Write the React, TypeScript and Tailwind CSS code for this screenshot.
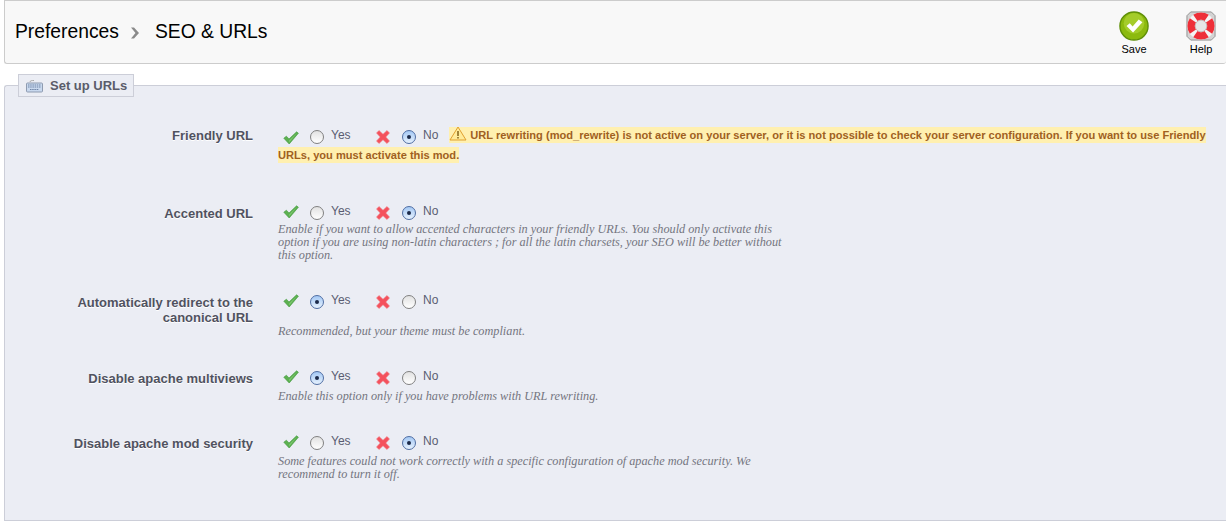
const sans = "font-['Liberation_Sans',Arial,sans-serif]";

function CheckIcon() {
	return (
		<svg width="16" height="14" viewBox="0 0 16 14" className="shrink-0">
			<path
				d="M0.8 7.2 L3.4 5.2 L6 8 L13.6 0.8 L15.4 2.2 L6.2 13 Z"
				fill="#5cb050"
				stroke="#3f9a3c"
				strokeWidth="0.6"
				strokeLinejoin="round"
			/>
			<path d="M6.1 9.6 L14 1.8 L6.2 11.6 Z" fill="#8fd07f" opacity="0.7" />
		</svg>
	);
}

function CrossIcon() {
	return (
		<svg width="14" height="14" viewBox="0 0 14 14" className="shrink-0">
			<path
				d="M0.5 3 L3 0.5 L7 4.2 L11 0.5 L13.5 3 L9.8 7 L13.5 11 L11 13.5 L7 9.8 L3 13.5 L0.5 11 L4.2 7 Z"
				fill="#f4515c"
				stroke="#f08088"
				strokeWidth="0.6"
				strokeLinejoin="round"
			/>
		</svg>
	);
}

function Radio({ checked }: { checked: boolean }) {
	return (
		<span
			className={
				checked
					? "flex size-[14px] shrink-0 items-center justify-center rounded-full border border-[#4f6da3] bg-gradient-to-b from-[#a4c8f4] to-[#e6f1fd]"
					: "block size-[14px] shrink-0 rounded-full border border-[#808080] bg-gradient-to-b from-[#e2e2e2] to-white"
			}
		>
			{checked && <span className="size-1 rounded-full bg-[#1c2a4a]" />}
		</span>
	);
}

function Toggle({
	yes,
	className = "-translate-y-[1px]",
	checkClassName = "-translate-y-[2px]",
}: {
	yes: boolean;
	className?: string;
	checkClassName?: string;
}) {
	return (
		<span className={`inline-flex h-5 items-center align-top text-xs text-[#5a5d72] ${className}`}>
			<span className={`ml-[5px] flex w-[16px] justify-center ${checkClassName}`}>
				<CheckIcon />
			</span>
			<span className="ml-[11px] -translate-y-[1px]">
				<Radio checked={yes} />
			</span>
			<span className="ml-[7px] w-[21px] -translate-y-[3px]">Yes</span>
			<span className="ml-[24px] -translate-y-[1px]">
				<CrossIcon />
			</span>
			<span className="ml-[12px] -translate-y-[1px]">
				<Radio checked={!yes} />
			</span>
			<span className="ml-[7px] -translate-y-[3px]">No</span>
		</span>
	);
}

function Row({
	label,
	className,
	children,
}: {
	label: React.ReactNode;
	className: string;
	children?: React.ReactNode;
}) {
	return (
		<div className={`flex ${className}`}>
			<div className="w-[248px] shrink-0 pt-[1px] text-right text-[13px] leading-[15px] font-bold text-[#50525f] [text-shadow:0_1px_0_#fff]">
				{label}
			</div>
			<div className="ml-[25px] w-[932px] shrink-0 text-[11px] leading-5">{children}</div>
		</div>
	);
}

function Hint({ className, children }: { className: string; children: React.ReactNode }) {
	return (
		<p
			className={`w-[510px] font-['Liberation_Serif',Georgia,serif] text-[12.25px] leading-[13px] text-[#74757f] italic ${className}`}
		>
			{children}
		</p>
	);
}

export default function App() {
	return (
		<div className={`h-[526px] w-[1226px] overflow-hidden bg-white pl-1 ${sans}`}>
			<header className="flex h-[64px] items-start justify-between rounded-b-[3px] border-t border-b border-l border-[#ccc] bg-[#f8f8f8]">
				<h1 className="mt-[19px] ml-[10px] flex items-center text-[19.3px] leading-6 text-black">
					Preferences
					<svg width="10" height="12" viewBox="0 0 10 12" className="mt-[2px] mr-[15px] ml-[11px]">
						<path d="M1 0.5 L4 0.5 L9 6 L4 11.5 L1 11.5 L5.5 6 Z" fill="#8a8a8a" />
					</svg>
					SEO &amp; URLs
				</h1>
				<div className="mr-[4px] flex gap-4 text-[11px] text-black">
					<div className="mt-[10px] flex w-[60px] flex-col items-center">
						<svg width="30" height="30" viewBox="0 0 32 32">
							<circle cx="16" cy="16" r="15" fill="#8cba0e" stroke="#5f8f08" strokeWidth="1.5" />
							<circle cx="16" cy="13" r="11" fill="#a4cc2a" />
							<path d="M8 16 L11.5 13 L14.5 16.5 L21 9 L25 12 L15 23 Z" fill="#fff" />
						</svg>
						<span className="mt-[2px] leading-[13px]">Save</span>
					</div>
					<div className="mt-[10px] flex w-[42px] flex-col items-center">
						<svg width="30" height="30" viewBox="0 0 32 32">
							<path
								d="M5 1 H27 L31 5 V27 L27 31 H5 L1 27 V5 Z"
								fill="#d4d4d4"
								stroke="#8e8e8e"
								strokeLinejoin="round"
							/>
							<circle cx="16" cy="16" r="10.5" fill="none" stroke="#f4f4f4" strokeWidth="8" />
							<path
								d="M10 7.4 A10.5 10.5 0 0 1 22 7.4 M10 24.6 A10.5 10.5 0 0 0 22 24.6 M7.4 10 A10.5 10.5 0 0 0 7.4 22 M24.6 10 A10.5 10.5 0 0 1 24.6 22"
								fill="none"
								stroke="#ee2f38"
								strokeWidth="8"
							/>
							<circle cx="16" cy="16" r="6.2" fill="#e6e6e6" stroke="#b89a9a" strokeWidth="0.6" />
						</svg>
						<span className="mt-[2px] leading-[13px]">Help</span>
					</div>
				</div>
			</header>
			<section className="relative mt-[21px] h-[436px] rounded-tl-[3px] border-t border-b border-l border-[#ccced8] bg-[#ebedf4] pt-[41px]">
				<div className="absolute top-[-12px] left-[13px] flex h-[23px] w-[116px] items-center border border-[#ccced8] bg-[#ebedf4] pl-[7px] text-[13px] font-bold text-[#5a5c6a]">
					<svg width="17" height="14" viewBox="0 0 17 14" className="mr-[7px] shrink-0">
						<path d="M4 3 C4 1.5 6 1.5 8 1.5" fill="none" stroke="#a8a8a8" />
						<rect x="0.5" y="4" width="16" height="9" rx="1" fill="#c8d8ee" stroke="#8e9bb0" />
						<path
							d="M2 6 H15 M2 8 H15 M4 10.5 H13"
							stroke="#6f84a6"
							strokeWidth="1"
							strokeDasharray="1.5 0.7"
						/>
					</svg>
					Set up URLs
				</div>
				<Row label="Friendly URL" className="h-[78px]">
					<Toggle yes={false} className="translate-y-[1px]" checkClassName="" />
					<span className="relative -top-[2px] ml-[11px] text-[11.1px] font-bold text-[#a0601f]">
						<span className="bg-[#fff0b0] py-[2px]">
							<svg
								width="18"
								height="15"
								viewBox="0 0 18 15"
								className="mr-[3px] inline-block align-[-2px]"
							>
								<path d="M9 1 L17 14 H1 Z" fill="#ffeb99" stroke="#e0a030" strokeLinejoin="round" />
								<path d="M9 5 V10 M9 11 V12.6" stroke="#7a5a10" strokeWidth="1.4" />
							</svg>
							URL rewriting (mod_rewrite) is not active on your server, or it is not possible to
							check your server configuration. If you want to use Friendly URLs, you must activate
							this mod.
						</span>
					</span>
				</Row>
				<Row label="Accented URL" className="h-[89px]">
					<Toggle yes={false} />
					<Hint className="-mt-[2px]">
						Enable if you want to allow accented characters in your friendly URLs. You should only
						activate this option if you are using non-latin characters ; for all the latin charsets,
						your SEO will be better without this option.
					</Hint>
				</Row>
				<Row
					label={
						<>
							Automatically redirect to the
							<br />
							canonical URL
						</>
					}
					className="h-[76px]"
				>
					<Toggle yes={true} />
					<Hint className="mt-[11px]">Recommended, but your theme must be compliant.</Hint>
				</Row>
				<Row label="Disable apache multiviews" className="h-[65px]">
					<Toggle yes={true} />
					<Hint className="mt-0">Enable this option only if you have problems with URL rewriting.</Hint>
				</Row>
				<Row label="Disable apache mod security" className="h-[65px]">
					<Toggle yes={false} />
					<Hint className="mt-0">
						Some features could not work correctly with a specific configuration of apache mod
						security. We recommend to turn it off.
					</Hint>
				</Row>
			</section>
		</div>
	);
}
